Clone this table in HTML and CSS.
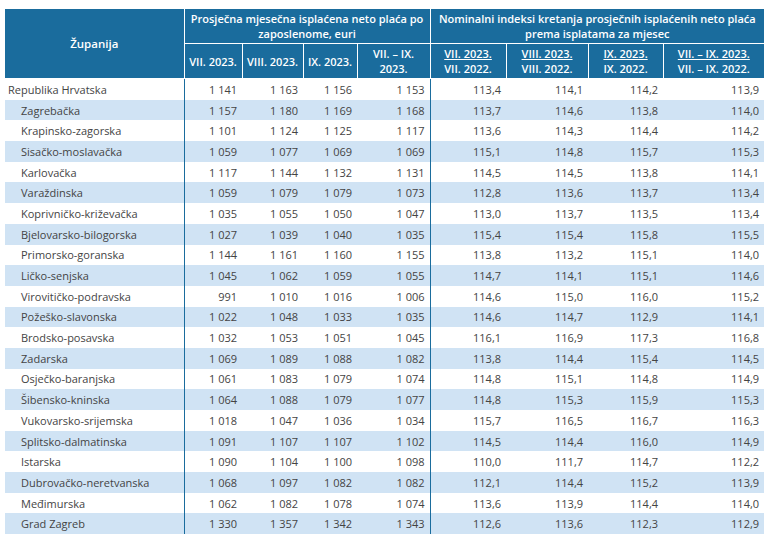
FILE: index.html
```html
<!DOCTYPE html>
<html lang="hr">
<head>
<meta charset="utf-8">
<title>Plaće po županijama</title>
<link rel="stylesheet" href="styles.css">
</head>
<body>
<table class="data">
  <colgroup>
    <col class="c-name"><col class="c1"><col class="c2"><col class="c3"><col class="c4">
    <col class="c5"><col class="c6"><col class="c7"><col class="c8">
  </colgroup>
  <thead>
    <tr class="h1">
      <th rowspan="2" class="sep">Županija</th>
      <th colspan="4" class="sep">Prosječna mjesečna isplaćena neto plaća po zaposlenome, euri</th>
      <th colspan="4">Nominalni indeksi kretanja prosječnih isplaćenih neto plaća prema isplatama za mjesec</th>
    </tr>
    <tr class="h2">
      <th>VII. 2023.</th>
      <th>VIII. 2023.</th>
      <th>IX. 2023.</th>
      <th class="sep">VII. – IX.<br>2023.</th>
      <th><span class="num">VII. 2023.</span><br>VII. 2022.</th>
      <th><span class="num">VIII. 2023.</span><br>VIII. 2022.</th>
      <th><span class="num">IX. 2023.</span><br>IX. 2022.</th>
      <th><span class="num">VII. – IX. 2023.</span><br>VII. – IX. 2022.</th>
    </tr>
  </thead>
  <tbody>
    <tr><td class="name top">Republika Hrvatska</td><td>1 141</td><td>1 163</td><td>1 156</td><td class="sep">1 153</td><td>113,4</td><td>114,1</td><td>114,2</td><td>113,9</td></tr>
    <tr><td class="name">Zagrebačka</td><td>1 157</td><td>1 180</td><td>1 169</td><td class="sep">1 168</td><td>113,7</td><td>114,6</td><td>113,8</td><td>114,0</td></tr>
    <tr><td class="name">Krapinsko-zagorska</td><td>1 101</td><td>1 124</td><td>1 125</td><td class="sep">1 117</td><td>113,6</td><td>114,3</td><td>114,4</td><td>114,2</td></tr>
    <tr><td class="name">Sisačko-moslavačka</td><td>1 059</td><td>1 077</td><td>1 069</td><td class="sep">1 069</td><td>115,1</td><td>114,8</td><td>115,7</td><td>115,3</td></tr>
    <tr><td class="name">Karlovačka</td><td>1 117</td><td>1 144</td><td>1 132</td><td class="sep">1 131</td><td>114,5</td><td>114,5</td><td>113,8</td><td>114,1</td></tr>
    <tr><td class="name">Varaždinska</td><td>1 059</td><td>1 079</td><td>1 079</td><td class="sep">1 073</td><td>112,8</td><td>113,6</td><td>113,7</td><td>113,4</td></tr>
    <tr><td class="name">Koprivničko-križevačka</td><td>1 035</td><td>1 055</td><td>1 050</td><td class="sep">1 047</td><td>113,0</td><td>113,7</td><td>113,5</td><td>113,4</td></tr>
    <tr><td class="name">Bjelovarsko-bilogorska</td><td>1 027</td><td>1 039</td><td>1 040</td><td class="sep">1 035</td><td>115,4</td><td>115,4</td><td>115,8</td><td>115,5</td></tr>
    <tr><td class="name">Primorsko-goranska</td><td>1 144</td><td>1 161</td><td>1 160</td><td class="sep">1 155</td><td>113,8</td><td>113,2</td><td>115,1</td><td>114,0</td></tr>
    <tr><td class="name">Ličko-senjska</td><td>1 045</td><td>1 062</td><td>1 059</td><td class="sep">1 055</td><td>114,7</td><td>114,1</td><td>115,1</td><td>114,6</td></tr>
    <tr><td class="name">Virovitičko-podravska</td><td>991</td><td>1 010</td><td>1 016</td><td class="sep">1 006</td><td>114,6</td><td>115,0</td><td>116,0</td><td>115,2</td></tr>
    <tr><td class="name">Požeško-slavonska</td><td>1 022</td><td>1 048</td><td>1 033</td><td class="sep">1 035</td><td>114,6</td><td>114,7</td><td>112,9</td><td>114,1</td></tr>
    <tr><td class="name">Brodsko-posavska</td><td>1 032</td><td>1 053</td><td>1 051</td><td class="sep">1 045</td><td>116,1</td><td>116,9</td><td>117,3</td><td>116,8</td></tr>
    <tr><td class="name">Zadarska</td><td>1 069</td><td>1 089</td><td>1 088</td><td class="sep">1 082</td><td>113,8</td><td>114,4</td><td>115,4</td><td>114,5</td></tr>
    <tr><td class="name">Osječko-baranjska</td><td>1 061</td><td>1 083</td><td>1 079</td><td class="sep">1 074</td><td>114,8</td><td>115,1</td><td>114,8</td><td>114,9</td></tr>
    <tr><td class="name">Šibensko-kninska</td><td>1 064</td><td>1 088</td><td>1 079</td><td class="sep">1 077</td><td>114,8</td><td>115,3</td><td>115,9</td><td>115,3</td></tr>
    <tr><td class="name">Vukovarsko-srijemska</td><td>1 018</td><td>1 047</td><td>1 036</td><td class="sep">1 034</td><td>115,7</td><td>116,5</td><td>116,7</td><td>116,3</td></tr>
    <tr><td class="name">Splitsko-dalmatinska</td><td>1 091</td><td>1 107</td><td>1 107</td><td class="sep">1 102</td><td>114,5</td><td>114,4</td><td>116,0</td><td>114,9</td></tr>
    <tr><td class="name">Istarska</td><td>1 090</td><td>1 104</td><td>1 100</td><td class="sep">1 098</td><td>110,0</td><td>111,7</td><td>114,7</td><td>112,2</td></tr>
    <tr><td class="name">Dubrovačko-neretvanska</td><td>1 068</td><td>1 097</td><td>1 082</td><td class="sep">1 082</td><td>112,1</td><td>114,4</td><td>115,2</td><td>113,9</td></tr>
    <tr><td class="name">Međimurska</td><td>1 062</td><td>1 082</td><td>1 078</td><td class="sep">1 074</td><td>113,6</td><td>113,9</td><td>114,4</td><td>114,0</td></tr>
    <tr><td class="name">Grad Zagreb</td><td>1 330</td><td>1 357</td><td>1 342</td><td class="sep">1 343</td><td>112,6</td><td>113,6</td><td>112,3</td><td>112,9</td></tr>
  </tbody>
</table>
</body>
</html>
```

FILE: styles.css
```css
html, body {
  margin: 0;
  padding: 0;
  background: #ffffff;
}
body {
  padding: 9px 0 0 5px;
  font-family: "Open Sans", "Liberation Sans", sans-serif;
  font-size: 11px;
  color: #444444;
}
.data {
  border-collapse: collapse;
  table-layout: fixed;
  width: 759px;
}
.c-name { width: 179px; }
.c1 { width: 58px; }
.c2 { width: 61px; }
.c3 { width: 54px; }
.c4 { width: 73px; }
.c5 { width: 76px; }
.c6 { width: 82px; }
.c7 { width: 75px; }
.c8 { width: 101px; }

thead th {
  background: #1a6c9d;
  color: #ffffff;
  font-weight: 600;
  line-height: 15px;
  text-align: center;
  vertical-align: middle;
  padding: 0 4px;
  border-left: 1px solid #ffffff;
  border-bottom: 1px solid #ffffff;
}
thead th:first-child { border-left: none; }
.h1 th { height: 34px; }
.h2 th { height: 34px; }
.h1 th:first-child { font-size: 11.5px; }
thead tr.h2 th:first-child { border-left: 1px solid #ffffff; }
thead th:last-child { border-bottom: 1px solid #ffffff; }
.num { text-decoration: underline; }

tbody td {
  height: 20.7px;
  padding: 0 5px 0 4px;
  text-align: right;
  vertical-align: middle;
  line-height: 15px;
  white-space: nowrap;
}
tbody tr:nth-child(even) td { background: #d0e3f4; }
tbody td.name {
  text-align: left;
  padding-left: 16px;
  border-right: 1px solid #1a6c9d;
}
tbody td.name.top { padding-left: 3px; }
tbody td.sep { border-right: 1px solid #1a6c9d; }
tbody tr:first-child td { border-top: none; }
```
